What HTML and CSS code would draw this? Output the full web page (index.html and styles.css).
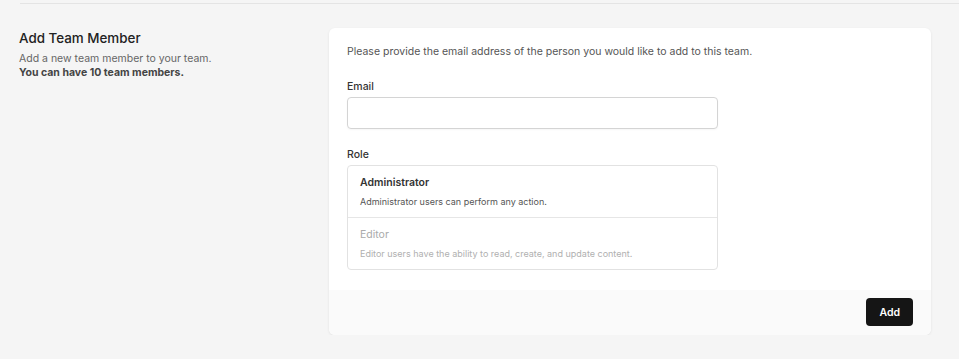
FILE: index.html
```html
<!DOCTYPE html>
<html lang="en">
<head>
  <meta charset="UTF-8">
  <meta name="viewport" content="width=device-width, initial-scale=1.0">
  <title>Add Team Member</title>
  <link rel="stylesheet" href="styles.css">
</head>
<body>
  <div class="page">
    <div class="divider"></div>

    <div class="section">
      <div class="section-aside">
        <h3>Add Team Member</h3>
        <p>Add a new team member to your team.<br><strong>You can have 10 team members.</strong></p>
      </div>

      <form class="card" onsubmit="return false">
        <div class="card-body">
          <p class="intro">Please provide the email address of the person you would like to add to this team.</p>

          <label class="field-label" for="email">Email</label>
          <input class="text-input" id="email" type="email">

          <div class="field-label role-label">Role</div>
          <div class="role-list">
            <button type="button" class="role active">
              <span class="role-name">Administrator</span>
              <span class="role-desc">Administrator users can perform any action.</span>
            </button>
            <button type="button" class="role">
              <span class="role-name">Editor</span>
              <span class="role-desc">Editor users have the ability to read, create, and update content.</span>
            </button>
          </div>
        </div>

        <div class="card-footer">
          <button type="submit" class="btn-add">Add</button>
        </div>
      </form>
    </div>
  </div>
</body>
</html>
```

FILE: styles.css
```css
body {
  margin: 0;
  padding: 0;
  background-color: #f5f5f5;
  font-family: Inter, 'Noto Sans', sans-serif;
  color: #333;
}

.page {
  padding-top: 3px;
}

.divider {
  margin-left: 20px;
  border-top: 1px solid #e4e4e4;
}

.section {
  display: grid;
  grid-template-columns: 310px 602px;
  padding: 24px 0 0 19px;
}

.section-aside h3 {
  margin: 0;
  font-size: 13.4px;
  line-height: 20px;
  font-weight: 500;
  color: #222;
}

.section-aside p {
  margin: 4px 0 0;
  font-size: 10.5px;
  line-height: 14px;
  color: #666;
}

.section-aside strong {
  font-weight: 700;
  color: #444;
}

.card {
  background-color: #fff;
  border-radius: 6px;
  box-shadow: 0 1px 3px rgba(0, 0, 0, 0.08);
  overflow: hidden;
}

.card-body {
  display: flex;
  flex-direction: column;
  padding: 17px 18px 20px;
}

.intro {
  margin: 0;
  font-size: 10.5px;
  line-height: 14px;
  color: #555;
}

.field-label {
  display: block;
  margin-top: 21px;
  font-size: 10.5px;
  line-height: 14px;
  font-weight: 500;
  color: #333;
}

.role-label {
  margin-top: 19px;
}

.text-input {
  box-sizing: border-box;
  width: 371px;
  height: 32px;
  margin-top: 3px;
  border: 1px solid #d4d4d4;
  border-radius: 4px;
  box-shadow: 0 1px 2px rgba(0, 0, 0, 0.04);
  outline: none;
}

.role-list {
  box-sizing: border-box;
  width: 371px;
  margin-top: 3px;
  border: 1px solid #e2e2e2;
  border-radius: 4px;
}

.role {
  display: flex;
  flex-direction: column;
  gap: 5px;
  width: 100%;
  padding: 10px 12px 8px;
  border: none;
  background: none;
  text-align: left;
  font-family: inherit;
  cursor: pointer;
}

.role + .role {
  border-top: 1px solid #e6e6e6;
  padding: 10px 12px 8px;
}

.role-name {
  font-size: 10.5px;
  line-height: 14px;
  color: #aaa;
}

.role-desc {
  font-size: 9px;
  line-height: 14px;
  color: #b0b0b0;
}

.role.active .role-name {
  font-weight: 600;
  color: #333;
}

.role.active .role-desc {
  color: #555;
}

.card-footer {
  display: flex;
  justify-content: flex-end;
  padding: 8px 18px 9px;
  background-color: #fafafa;
}

.btn-add {
  height: 28px;
  padding: 0 13px;
  border: none;
  border-radius: 4px;
  background-color: #151515;
  color: #fff;
  font-family: inherit;
  font-size: 10.5px;
  font-weight: 600;
  cursor: pointer;
}
```
